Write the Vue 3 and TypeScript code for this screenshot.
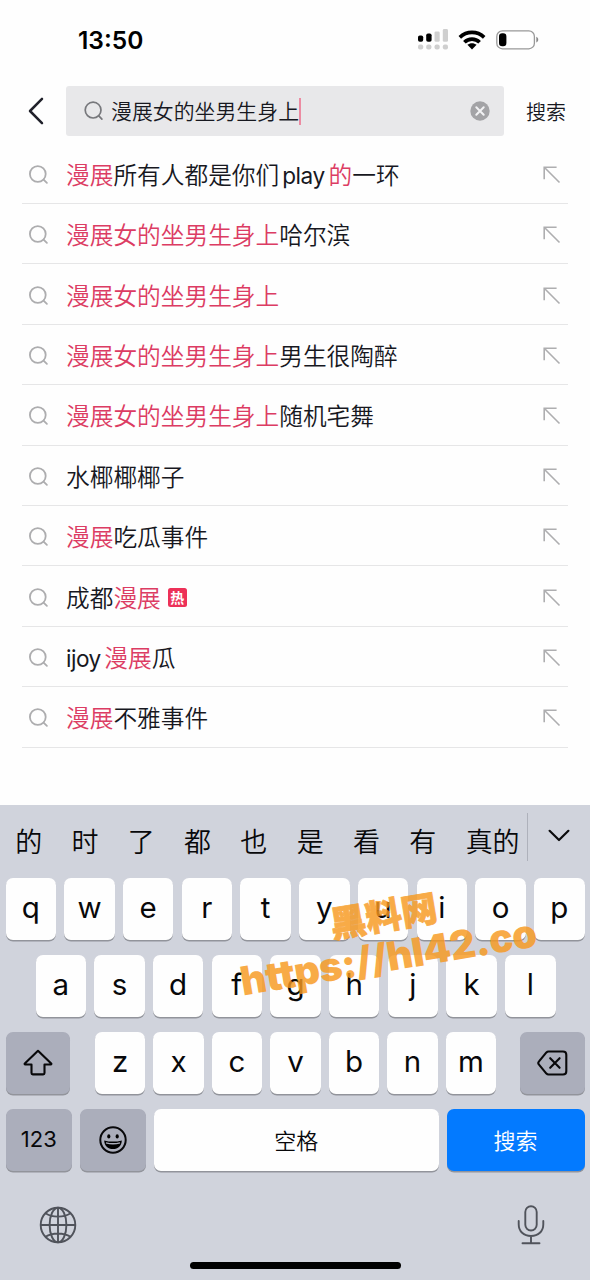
<script setup lang="ts">
interface Part {
  text: string
  hit?: boolean
  latin?: boolean
}

interface Suggestion {
  parts: Part[]
  hot?: boolean
}

const query = '漫展女的坐男生身上'

const suggestions: Suggestion[] = [
  {
    parts: [
      { text: '漫展', hit: true },
      { text: '所有人都是你们' },
      { text: 'play', latin: true },
      { text: '的', hit: true },
      { text: '一环' },
    ],
  },
  { parts: [{ text: query, hit: true }, { text: '哈尔滨' }] },
  { parts: [{ text: query, hit: true }] },
  { parts: [{ text: query, hit: true }, { text: '男生很陶醉' }] },
  { parts: [{ text: query, hit: true }, { text: '随机宅舞' }] },
  { parts: [{ text: '水椰椰椰子' }] },
  { parts: [{ text: '漫展', hit: true }, { text: '吃瓜事件' }] },
  { parts: [{ text: '成都' }, { text: '漫展', hit: true }], hot: true },
  { parts: [{ text: 'ijoy', latin: true }, { text: '漫展', hit: true }, { text: '瓜' }] },
  { parts: [{ text: '漫展', hit: true }, { text: '不雅事件' }] },
]

const candidates: string[] = ['的', '时', '了', '都', '也', '是', '看', '有']
const rowTop: string[] = [...'qwertyuiop']
const rowMid: string[] = [...'asdfghjkl']
const rowLow: string[] = [...'zxcvbnm']
</script>

<template>
  <div class="phone">
    <header class="status">
      <span class="clock">13:50</span>
      <div class="indicators">
        <svg class="signal" width="31" height="22" viewBox="0 0 31 22">
          <g fill="#000">
            <rect x="0" y="6.5" width="5.2" height="6.3" rx="1.8" />
            <rect x="8.2" y="4.5" width="5.4" height="8.3" rx="1.8" />
          </g>
          <g fill="#cfcfcf">
            <rect x="16.5" y="2.4" width="5.2" height="10.4" rx="1.4" />
            <rect x="24.8" y="0" width="5.2" height="12.8" rx="1.4" />
            <rect x="0" y="15.6" width="5.2" height="5" rx="2" />
            <rect x="8.2" y="15.6" width="5.2" height="5" rx="2" />
            <rect x="16.5" y="15.6" width="5.2" height="5" rx="2" />
            <rect x="24.8" y="15.6" width="5.2" height="5" rx="2" />
          </g>
        </svg>
        <svg class="wifi" width="28" height="20" viewBox="0 0 28 20">
          <g fill="none" stroke="#000" stroke-width="3.7">
            <path d="M1.8 7.4C8.8 .8 19.2 .8 26.2 7.4" />
            <path d="M6.4 12.3c4.3-4.3 10.9-4.3 15.2 0" />
          </g>
          <path d="M14 19.4l-4.6-4.6c2.5-2.2 6.7-2.2 9.2 0z" />
        </svg>
        <svg class="battery" width="43" height="20" viewBox="0 0 43 20">
          <rect x=".8" y=".8" width="37.6" height="18" rx="5.6" fill="#fff" stroke="#999" stroke-width="1.3" />
          <rect x="3" y="3.3" width="7.4" height="13" rx="3.2" />
          <path d="M40.3 6.8c2.6 1 2.6 4.8 0 5.8z" fill="#888" />
        </svg>
      </div>
    </header>

    <div class="search">
      <svg class="back" width="16" height="28" viewBox="0 0 16 28">
        <path d="M14 1.8L2 14l12 12.2" fill="none" stroke="#20212a" stroke-width="2.5" stroke-linecap="round" stroke-linejoin="round" />
      </svg>
      <div class="field">
        <svg class="lens" width="20" height="20" viewBox="0 0 20 20">
          <g fill="none" stroke="#77787c" stroke-width="1.7" stroke-linecap="round">
            <circle cx="9.1" cy="9.1" r="7.9" />
            <path d="M14.8 14.8l3.1 3.3" />
          </g>
        </svg>
        <span class="query">{{ query }}</span>
        <i class="caret"></i>
        <svg class="clear" width="20" height="20" viewBox="0 0 20 20">
          <circle cx="10" cy="10" r="9.7" fill="#a3a3a6" />
          <path d="M6.3 6.3l7.4 7.4M13.7 6.3l-7.4 7.4" stroke="#f2f2f4" stroke-width="2" stroke-linecap="round" />
        </svg>
      </div>
      <span class="submit">搜索</span>
    </div>

    <ul class="list">
      <li v-for="(item, i) in suggestions" :key="i" class="item">
        <svg class="item-lens" width="20" height="20" viewBox="0 0 20 20">
          <g fill="none" stroke="#adadaf" stroke-width="1.8" stroke-linecap="round">
            <circle cx="8.8" cy="9" r="7.9" />
            <path d="M14.8 14.8l3.1 3.1" />
          </g>
        </svg>
        <p class="words">
          <span v-for="(part, j) in item.parts" :key="j" :class="{ hit: part.hit, latin: part.latin }">{{ part.text }}</span>
        </p>
        <span v-if="item.hot" class="hot">热</span>
        <svg class="fill" width="18" height="18" viewBox="0 0 18 18">
          <path d="M13.6 1.2H1.2v12M1.5 1.5L16.5 16.5" fill="none" stroke="#aeaeb0" stroke-width="1.6" />
        </svg>
      </li>
    </ul>

    <section class="keyboard">
      <div class="candidates">
        <span v-for="word in candidates" :key="word" class="candidate">{{ word }}</span>
        <span class="candidate wide">真的</span>
        <i class="rule"></i>
        <svg class="expand" width="22" height="13" viewBox="0 0 22 13">
          <path d="M1.6 1.8L11 11l9.4-9.2" fill="none" stroke="#0b0b0d" stroke-width="2.2" stroke-linecap="round" stroke-linejoin="round" />
        </svg>
      </div>

      <div class="keys">
        <div class="row top">
          <span v-for="k in rowTop" :key="k" class="key">{{ k }}</span>
        </div>
        <div class="row mid">
          <span v-for="k in rowMid" :key="k" class="key">{{ k }}</span>
        </div>
        <div class="row low">
          <span class="key dark">
            <svg width="30" height="27" viewBox="0 0 30 27">
              <path d="M15 1.8L1.8 14.6c-.4.4-.2.9.4.9H8.5v8.6c0 .8.5 1.3 1.3 1.3h10.4c.8 0 1.3-.5 1.3-1.3v-8.6h6.3c.6 0 .8-.5.4-.9z" fill="none" stroke="#08080a" stroke-width="2.1" stroke-linejoin="round" />
            </svg>
          </span>
          <div class="letters">
            <span v-for="k in rowLow" :key="k" class="key">{{ k }}</span>
          </div>
          <span class="key dark">
            <svg width="31" height="26" viewBox="0 0 31 26">
              <g fill="none" stroke="#08080a" stroke-width="2.1" stroke-linecap="round" stroke-linejoin="round">
                <path d="M11.5 1.5H26c2.1 0 3.3 1.2 3.3 3.3v16.4c0 2.1-1.2 3.3-3.3 3.3H11.5c-.9 0-1.5-.3-2.1-.9L2 14.6c-1-1.1-1-2.1 0-3.2L9.4 2.4c.6-.6 1.2-.9 2.1-.9z" />
                <path d="M13.2 8.2l9.4 9.6M22.6 8.2l-9.4 9.6" />
              </g>
            </svg>
          </span>
        </div>
        <div class="row bottom">
          <span class="key dark digits">123</span>
          <span class="key dark">
            <svg width="28" height="28" viewBox="0 0 28 28">
              <circle cx="14" cy="14" r="12.7" fill="none" stroke="#08080a" stroke-width="2" />
              <ellipse cx="9.8" cy="10.4" rx="1.6" ry="2.1" />
              <ellipse cx="18.2" cy="10.4" rx="1.6" ry="2.1" />
              <path d="M5.2 14.4c5.6 1.6 12 1.6 17.6 0 0 5.2-3.8 8.7-8.8 8.7s-8.8-3.5-8.8-8.7z" />
              <path d="M7 16.9c4.5 1.2 9.5 1.2 14 0" fill="none" stroke="#abaebb" stroke-width="1.5" />
            </svg>
          </span>
          <span class="key word">空格</span>
          <span class="key word go">搜索</span>
        </div>
      </div>

      <footer class="tools">
        <svg width="38" height="38" viewBox="0 0 38 38">
          <g fill="none" stroke="#50535b" stroke-width="1.9">
            <circle cx="19" cy="19" r="17.3" />
            <ellipse cx="19" cy="19" rx="8.4" ry="17.3" />
            <path d="M19 1.7v34.6M1.7 19h34.6M6.5 7.2c6.8 4.5 18.2 4.5 25 0M6.5 30.8c6.8-4.5 18.2-4.5 25 0" />
          </g>
        </svg>
        <svg width="28" height="40" viewBox="0 0 28 40">
          <g fill="none" stroke="#50535b" stroke-width="1.9" stroke-linecap="round">
            <rect x="8.3" y="1.2" width="11.4" height="24.3" rx="5.7" />
            <path d="M1.7 16v3.2c0 7.2 5 11.8 12.3 11.8s12.3-4.6 12.3-11.8V16M14 31v7M5.5 38.3h17" />
          </g>
        </svg>
      </footer>
      <i class="home"></i>
    </section>

    <div class="stamp">
      <span class="stamp-name">黑料网</span>
      <span class="stamp-url">https://hl42.co</span>
    </div>
  </div>
</template>

<style>
body {
  margin: 0;
  background: #fff;
}
</style>

<style scoped>
.phone {
  position: relative;
  display: flex;
  flex-direction: column;
  width: 590px;
  height: 1280px;
  overflow: hidden;
  background: #fefefe;
  color: #17181f;
  font-family: Inter, 'Noto Sans CJK SC', sans-serif;
}

svg {
  display: block;
  flex: none;
}

.status {
  display: flex;
  align-items: center;
  justify-content: space-between;
  height: 80px;
  padding: 0 51px 0 78px;
  box-sizing: border-box;
}

.clock {
  font-size: 24.5px;
  font-weight: 600;
  color: #000;
}

.indicators {
  display: flex;
  align-items: center;
}

.wifi {
  margin-left: 9px;
}

.battery {
  margin-left: 10px;
}

.search {
  display: flex;
  align-items: center;
  height: 50px;
  margin-top: 6px;
  padding-left: 28px;
}

.field {
  display: flex;
  align-items: center;
  width: 437.5px;
  height: 50px;
  margin-left: 22px;
  padding: 0 14px 0 18px;
  box-sizing: border-box;
  border-radius: 3px;
  background: #e8e8ea;
}

.query {
  margin: 2px 0 0 7px;
  font-size: 20.9px;
  font-weight: 350;
  line-height: 30px;
}

.caret {
  width: 2.5px;
  height: 27px;
  margin-left: -0.5px;
  background: #ec8ba2;
}

.clear {
  margin-left: auto;
}

.submit {
  margin: 1px 0 0 22.5px;
  font-size: 20px;
  font-weight: 350;
}

.list {
  margin: 7.5px 22px 0;
  padding: 0;
  list-style: none;
}

.item {
  display: flex;
  align-items: center;
  height: 60.42px;
  padding: 3px 7px 0 6.5px;
  box-sizing: border-box;
  border-bottom: 1px solid #e6e6e7;
}

.words {
  display: flex;
  align-items: baseline;
  margin: 2px 0 0 17.5px;
  font-size: 23.7px;
  font-weight: 350;
  line-height: 34px;
  white-space: nowrap;
}

.hit {
  color: #dc3c63;
}

.latin {
  margin: 0 4px 0 3px;
  font-size: 22.6px;
  font-weight: 400;
  letter-spacing: -0.5px;
}

.latin:first-child {
  margin: 0 3.5px 0 0;
}

.hot {
  width: 19px;
  height: 19px;
  margin-left: 7px;
  border-radius: 2.5px;
  background: #ed3158;
  color: #fff;
  font-size: 14px;
  font-weight: 700;
  line-height: 19px;
  text-align: center;
}

.fill {
  margin-left: auto;
}

.keyboard {
  display: flex;
  flex-direction: column;
  height: 475.5px;
  margin-top: auto;
  background: #d0d3dc;
  color: #08080a;
}

.candidates {
  display: flex;
  align-items: center;
  height: 73px;
  padding-left: 0.5px;
  font-size: 27px;
  font-weight: 350;
  line-height: 40px;
}

.candidate {
  width: 56.3px;
  padding-top: 4px;
  text-align: center;
}

.candidate.wide {
  width: 76.5px;
  white-space: nowrap;
  text-indent: 7px;
}

.rule {
  width: 1px;
  height: 48px;
  margin-top: -9px;
  background: #aeb1bb;
}

.expand {
  margin: -11px 0 0 20px;
}

.keys {
  display: flex;
  flex-direction: column;
  gap: 15px;
  padding: 0 5.5px;
}

.row {
  display: flex;
  gap: 8.2px;
  height: 62px;
}

.mid {
  padding: 0 29px 0 30px;
}

.low {
  justify-content: space-between;
}

.letters {
  display: flex;
  gap: 8.2px;
  width: 401px;
  margin-left: 1px;
}

.key {
  display: flex;
  flex: 1 1 0;
  align-items: center;
  justify-content: center;
  padding-bottom: 4px;
  box-sizing: border-box;
  border-radius: 7px;
  background: #fefefe;
  box-shadow: 0 1.5px 0 #92949b;
  font-size: 29.5px;
  font-weight: 400;
  line-height: 36px;
}

.key.dark {
  padding: 0;
  background: #abaebb;
}

.low > .key {
  flex: 0 0 64.5px;
}

.bottom {
  gap: 7.5px;
}

.bottom > .key {
  flex: 0 0 66.5px;
}

.bottom > .digits {
  padding-bottom: 2px;
  font-size: 22px;
}

.bottom > .word {
  flex: 0 0 285.5px;
  padding: 2px 0 0;
  font-size: 22px;
  font-weight: 350;
}

.bottom > .go {
  flex: 1 1 0;
  background: #037aff;
  color: #fff;
}

.tools {
  display: flex;
  align-items: center;
  justify-content: space-between;
  height: 40px;
  margin-top: 34px;
  padding: 0 45px 0 39px;
}

.home {
  width: 211px;
  height: 7px;
  margin: 17px auto 0;
  border-radius: 4px;
  background: #000;
}

.stamp {
  position: absolute;
  left: 237px;
  top: 896px;
  display: flex;
  flex-direction: column;
  align-items: center;
  width: 300px;
  transform: rotate(-9.5deg);
  color: #f79920;
  opacity: 0.82;
  font-weight: 900;
  white-space: nowrap;
}

.stamp-name {
  font-size: 36px;
  line-height: 40px;
  -webkit-text-stroke: 0.8px #f79920;
}

.stamp-url {
  margin-left: -4px;
  font-size: 39.5px;
  line-height: 42px;
  letter-spacing: -0.4px;
  font-feature-settings: 'calt' 0;
}
</style>
